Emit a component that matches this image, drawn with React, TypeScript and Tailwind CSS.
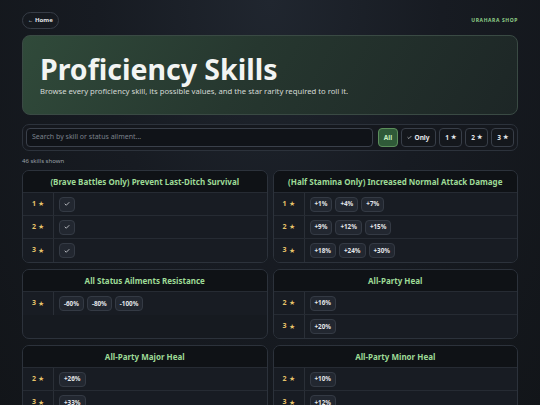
import { Check } from "lucide-react";

type Skill = { name: string; rows: { star: number; values: string[] }[] };

const skills: Skill[] = [
  {
    name: "(Brave Battles Only) Prevent Last-Ditch Survival",
    rows: [
      { star: 1, values: ["✓"] },
      { star: 2, values: ["✓"] },
      { star: 3, values: ["✓"] },
    ],
  },
  {
    name: "(Half Stamina Only) Increased Normal Attack Damage",
    rows: [
      { star: 1, values: ["+1%", "+4%", "+7%"] },
      { star: 2, values: ["+9%", "+12%", "+15%"] },
      { star: 3, values: ["+18%", "+24%", "+30%"] },
    ],
  },
  {
    name: "All Status Ailments Resistance",
    rows: [{ star: 3, values: ["-60%", "-80%", "-100%"] }],
  },
  {
    name: "All-Party Heal",
    rows: [
      { star: 2, values: ["+16%"] },
      { star: 3, values: ["+20%"] },
    ],
  },
  {
    name: "All-Party Major Heal",
    rows: [
      { star: 2, values: ["+26%"] },
      { star: 3, values: ["+33%"] },
    ],
  },
  {
    name: "All-Party Minor Heal",
    rows: [
      { star: 2, values: ["+10%"] },
      { star: 3, values: ["+12%"] },
    ],
  },
];

function SkillCard({ skill }: { skill: Skill }) {
  return (
    <div className="rounded-[7px] border border-[#2c323b] bg-[#161a20] overflow-hidden flex flex-col">
      <div className="h-[22px] flex items-center justify-center bg-[#0f1216] border-b border-[#262b33] text-[8px] font-bold text-[#9edb96]">
        {skill.name}
      </div>
      <div className="flex flex-col">
        {skill.rows.map((r, i) => (
          <div key={i} className="flex h-[23px] border-b border-[#262b33] last:border-b-0 bg-[#181c23]">
            <div className="w-[31px] shrink-0 border-r border-[#2a2f37] flex items-center justify-center gap-[2px] text-[#e6c36a]">
              <span className="text-[7px] font-bold">{r.star}</span>
              <span className="text-[6.5px]">★</span>
            </div>
            <div className="flex items-center gap-[3px] pl-[5px]">
              {r.values.map((v) => (
                <span
                  key={v}
                  className="h-[15px] min-w-[15px] px-[4px] flex items-center justify-center rounded-[4px] border border-[#343a44] bg-[#222730] text-[6.3px] font-bold text-[#e4e6ea]"
                >
                  {v === "✓" ? <Check size={6} strokeWidth={3} /> : v}
                </span>
              ))}
            </div>
          </div>
        ))}
      </div>
    </div>
  );
}

export default function App() {
  return (
    <div
      className="min-h-screen w-[540px] bg-[radial-gradient(ellipse_at_top,#20262f_0%,#171b22_45%,#121519_100%)] text-white"
      style={{ fontFamily: '"Noto Sans", "Open Sans", sans-serif' }}
    >
      <div className="mx-[22px] pt-[12px]">
        <div className="flex items-center justify-between h-[17px]">
          <span className="h-[17px] px-[5px] flex items-center gap-[2px] rounded-full border border-[#363c46] text-[6px] font-bold text-[#e6e8ec]">
            <span className="text-[5px]">←</span> Home
          </span>
          <span className="text-[5px] font-bold tracking-[0.12em] text-[#8fcf88]">URAHARA SHOP</span>
        </div>

        <div className="mt-[6px] h-[80px] rounded-[8px] border border-[#3a4a44] bg-[linear-gradient(120deg,#304a3a_0%,#26372f_45%,#1d2626_100%)] pl-[17px] pt-[18px]">
          <h1 className="text-[28.5px] leading-[30px] font-bold text-[#f2f4f3]">Proficiency Skills</h1>
          <p className="mt-[2px] text-[7.7px] leading-[10px] text-[#d4dad6]">
            Browse every proficiency skill, its possible values, and the star rarity required to roll it.
          </p>
        </div>

        <div className="mt-[9px] h-[27px] rounded-[7px] border border-[#2c323b] bg-[#15181e] flex items-center px-[3px] gap-[3px]">
          <div className="flex-1 h-[19px] rounded-[4px] border border-[#3a404a] bg-[#101318] flex items-center px-[5px] text-[7px] text-[#7b818b]">
            Search by skill or status ailment...
          </div>
          <span className="ml-[2px] h-[19px] w-[20px] flex items-center justify-center rounded-[4px] border border-[#5c8e5c] bg-[#2f5a38] text-[6.5px] font-bold text-[#c8f0c0]">
            All
          </span>
          <span className="h-[19px] w-[35px] flex items-center justify-center gap-[2px] rounded-[4px] border border-[#383e48] bg-[#14171c] text-[6.5px] font-bold text-[#e6e8ec]">
            <Check size={5} strokeWidth={3} /> Only
          </span>
          {[1, 2, 3].map((n) => (
            <span
              key={n}
              className="h-[19px] w-[23px] flex items-center justify-center gap-[2px] rounded-[4px] border border-[#383e48] bg-[#14171c] text-[6.5px] font-bold text-[#e6e8ec]"
            >
              {n} <span className="text-[6px]">★</span>
            </span>
          ))}
        </div>

        <div className="mt-[4px] text-[6px] text-[#9aa0a8] h-[12px] leading-[12px]">46 skills shown</div>

        <div className="mt-[3px] grid grid-cols-2 gap-x-[5px] gap-y-[6px]">
          {skills.map((s) => (
            <SkillCard key={s.name} skill={s} />
          ))}
        </div>
      </div>
    </div>
  );
}
